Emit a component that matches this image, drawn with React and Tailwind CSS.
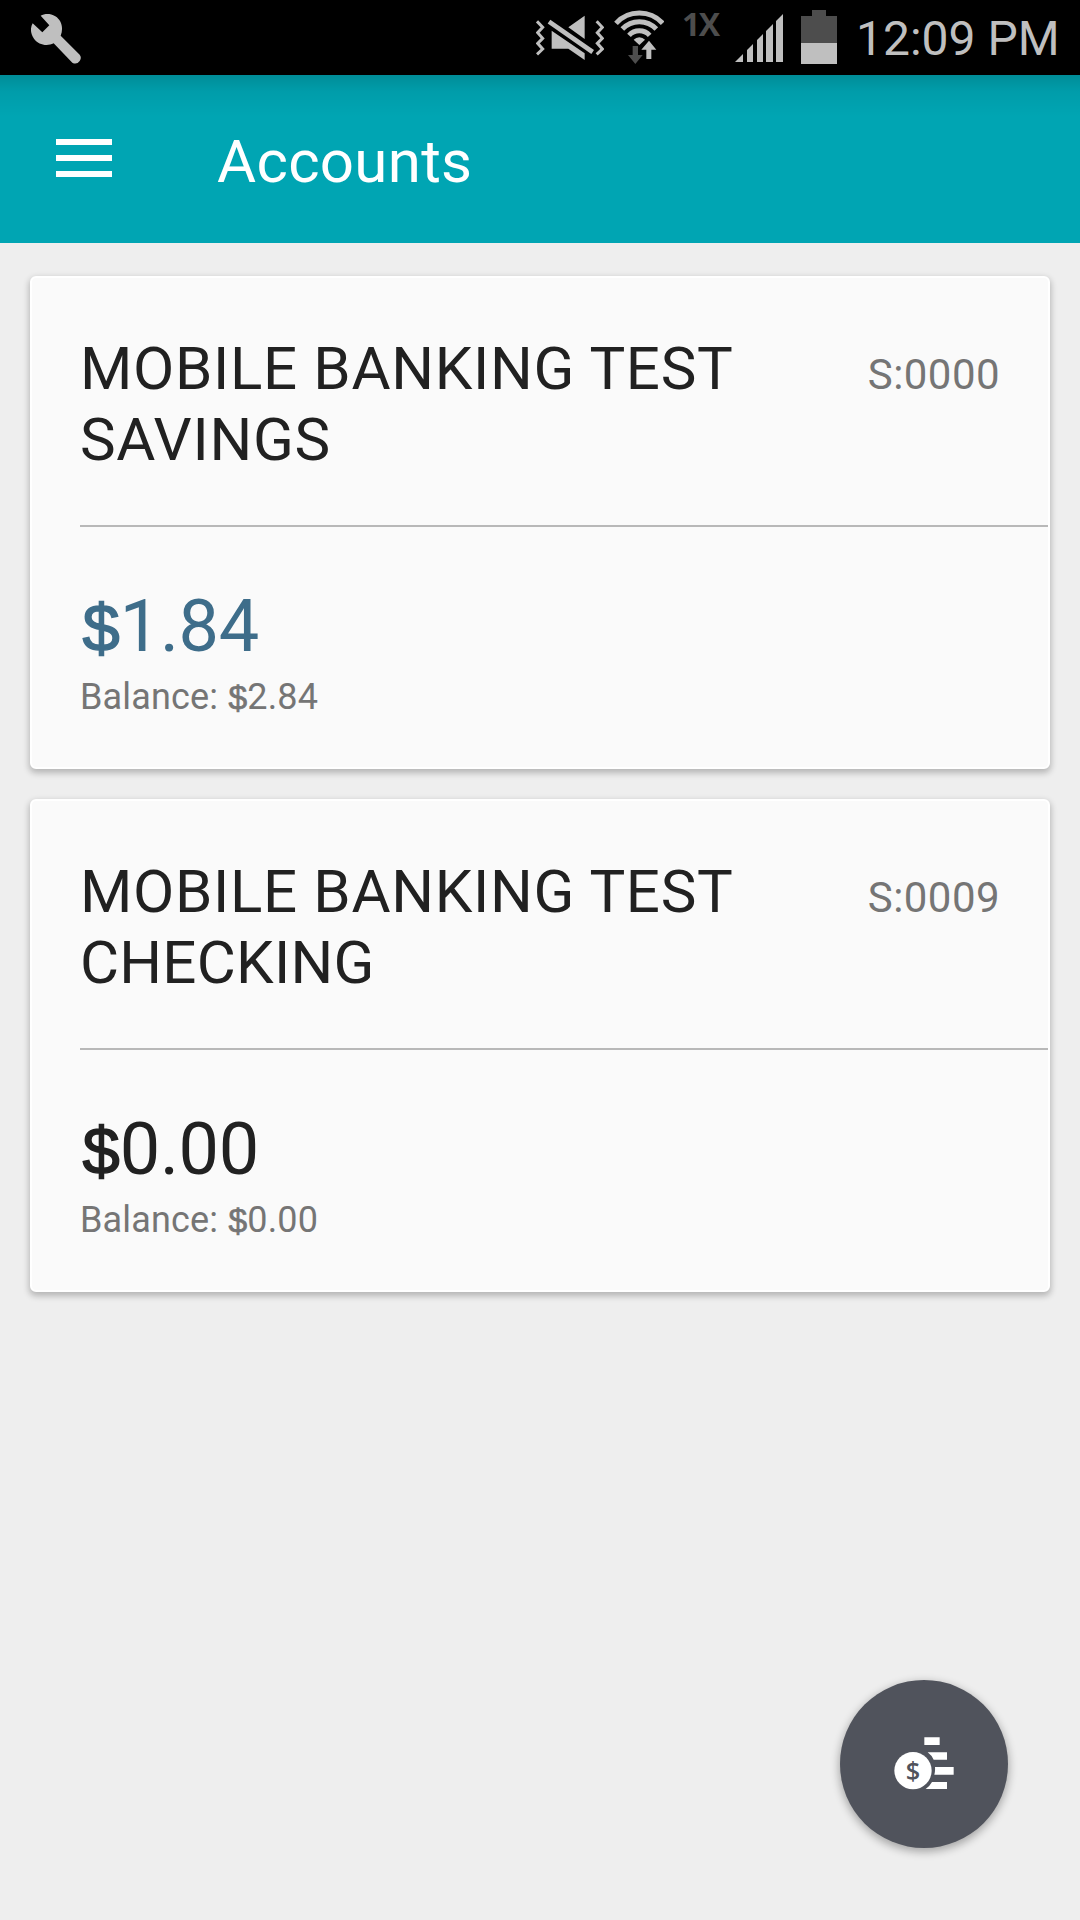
const accounts = [
  { title: "MOBILE BANKING TEST", type: "SAVINGS", number: "S:0000", available: "1.84", balance: "2.84", color: "text-[#3e6d8a]", tracking: "tracking-[0.7px]" },
  { title: "MOBILE BANKING TEST", type: "CHECKING", number: "S:0009", available: "0.00", balance: "0.00", color: "text-[#212121]", tracking: "tracking-[0.25px]" },
];

const StatusBar = () => {
  return (
    <div className="flex h-[75px] items-start bg-black pr-[19px] text-[#bfbfbf]">
      <svg className="ml-[31px] mt-[14px] h-[50px] w-[50px]" viewBox="0 0 150 150">
        <path fill="#bfbfbf" d="M29 5C40 0 56-3 73 7C92 19 98 42 89 65L146 122Q153 131 146 141Q137 153 124 146L68 88C47 98 22 92 9 74C-3 57-2 40 5 28L34 55L55 34Z" />
      </svg>
      <svg className="ml-auto mt-[14px] h-[50px] w-[68px]" viewBox="48 42 204 150">
        <path fill="none" stroke="#bfbfbf" strokeWidth="9" d="M51 64L68 82L53 98L68 115L53 130L68 147L51 163M230 64L247 82L232 98L247 115L232 130L247 147L230 163" />
        <path fill="none" stroke="#bfbfbf" strokeWidth="14" d="M87 65L218 156" />
        <path fill="#bfbfbf" d="M194 47V117L145 82ZM95 92L194 160V180L145 146H95Z" />
      </svg>
      <svg className="ml-[10px] mt-[10px] h-[55px] w-[50px]" viewBox="282 30 150 165">
        <g fill="none" stroke="#bfbfbf" strokeWidth="15">
          <path d="M288 70A95 95 0 0 1 428 70" />
          <path d="M307 87A70 70 0 0 1 409 87" />
          <path d="M327 106A42 42 0 0 1 389 106" />
        </g>
        <path fill="#bfbfbf" d="M341 119A23 23 0 0 1 375 119L358 135Z" />
        <path fill="#bfbfbf" stroke="#000" strokeWidth="4" paintOrder="stroke" d="M387 122L409 149H394V177H379V149H364Z" />
        <path fill="#4d4d4d" d="M338 138H354V165H368L346 192L324 165H338Z" />
      </svg>
      <span className="ml-[18px] mt-[6px] w-[36px] font-['Open_Sans',sans-serif] text-[32px] leading-[36px] font-bold tracking-[-1.5px] text-[#4d4d4d]">1X</span>
      <svg className="ml-[17px] mt-[14px] h-[48px] w-[48px]" viewBox="0 0 48 48">
        <path fill="#bfbfbf" d="M0 48L8 40V48ZM12 36L18 30V48H12ZM22 26L28 20V48H22ZM31 17L38 10V48H31ZM41 7L48 0V48H41Z" />
      </svg>
      <svg className="ml-[18px] mt-[10px] h-[54px] w-[36px]" viewBox="0 0 36 54">
        <path fill="#4d4d4d" d="M11 0H25V6H36V33H0V6H11Z" />
        <path fill="#bfbfbf" d="M0 33H36V54H0Z" />
      </svg>
      <span className="ml-[19px] mt-[11px] w-[205px] text-[48px] leading-[56px] whitespace-nowrap">12:09 PM</span>
    </div>
  );
};

const Dollar = () => (
  <span className="mr-[0.004em] ml-[0.038em] font-['Liberation_Sans',sans-serif] text-[0.93em] leading-none [-webkit-text-stroke:0.022em_currentColor]">$</span>
);

const AccountCard = ({ account }) => {
  return (
    <section className="h-[493px] rounded-[6px] border-2 border-white bg-[#fafafa] pt-[55px] pl-12 shadow-[0_3px_6px_1px_rgba(0,0,0,0.24)]">
      <div className="flex h-[192px] items-start justify-between pr-[48px]">
        <h2 className="w-[680px] text-[60px] leading-[71px] tracking-[0.67px] text-[#212121]">
          {account.title} <span className={account.tracking}>{account.type}</span>
        </h2>
        <span className="mt-[17px] text-[42px] leading-[49px] tracking-[0.45px] text-[#757575]">{account.number}</span>
      </div>
      <div className="h-[2px] bg-[#b8b8b8]" />
      <p className={`mt-[58px] h-[84px] text-[72px] leading-[84px] tracking-[-0.3px] ${account.color}`}><Dollar />{account.available}</p>
      <p className="mt-[7px] h-[42px] text-[36px] leading-[42px] tracking-[0.15px] text-[#757575]">Balance: <Dollar />{account.balance}</p>
    </section>
  );
};

const App = () => {
  return (
    <main className="relative h-[1920px] w-[1080px] overflow-hidden bg-[#eeeeee] font-[Roboto,sans-serif]">
      <StatusBar />
      <header className="flex h-[168px] items-start bg-[#00a5b3] bg-linear-to-b from-black/15 via-black/5 via-10% to-transparent to-25% text-white">
        <button className="mt-16 ml-14 flex w-14 flex-col gap-[10px]">
          <span className="h-[6px] w-full bg-white" />
          <span className="h-[6px] w-full bg-white" />
          <span className="h-[6px] w-full bg-white" />
        </button>
        <h1 className="mt-[51px] ml-[105px] text-[60px] leading-[71px] tracking-[0.3px]">Accounts</h1>
      </header>
      <div className="flex flex-col gap-[30px] px-[30px] pt-[33px]">
        {accounts.map((account) => (
          <AccountCard key={account.number} account={account} />
        ))}
      </div>
      <button className="absolute right-[72px] bottom-[72px] flex h-[168px] w-[168px] items-center justify-center rounded-full bg-[#50535c] shadow-[0_3px_8px_1px_rgba(0,0,0,0.3)]">
        <svg className="h-[60px] w-[60px]" viewBox="222 222 180 180">
          <path fill="#fff" d="M313 232H359V255H313ZM323 277H381V299H341Q335 286 323 277ZM345 321H401V344H343Q346 333 345 321ZM336 366H381V387H317Q329 379 336 366Z" />
          <circle cx="279" cy="332" r="56" fill="#fff" />
          <text x="279" y="359" textAnchor="middle" fontSize="76" fontWeight="600" fill="#50535c" fontFamily="Open Sans, sans-serif">$</text>
        </svg>
      </button>
    </main>
  );
};

export default App;
